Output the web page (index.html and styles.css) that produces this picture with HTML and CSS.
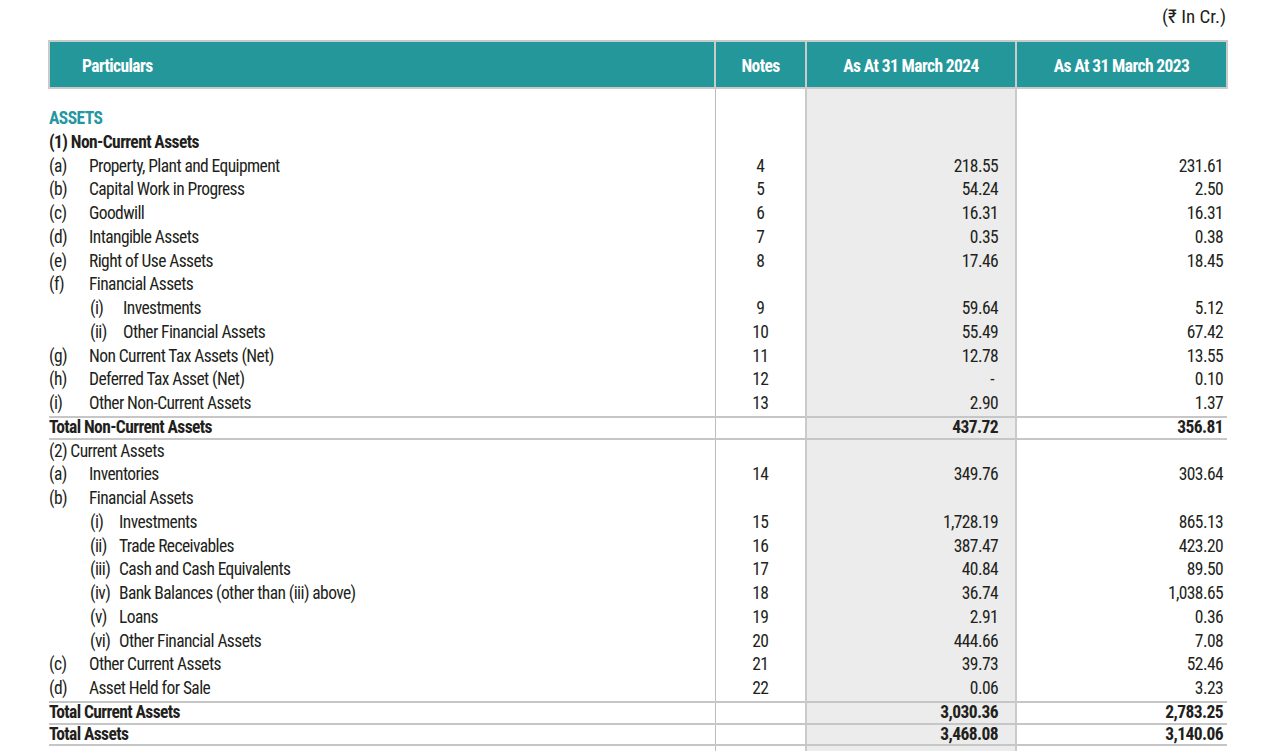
FILE: index.html
```html
<!DOCTYPE html>
<html lang="en">
<head>
<meta charset="utf-8">
<title>Balance Sheet</title>
<link rel="stylesheet" href="styles.css">
</head>
<body>
<div class="page">
  <div class="unit">(₹ In Cr.)</div>
  <table class="bs">
    <colgroup>
      <col class="w-part"><col class="w-notes"><col class="w-cur"><col class="w-prev">
    </colgroup>
    <thead>
      <tr>
        <th class="h-part">Particulars</th>
        <th class="h-notes">Notes</th>
        <th class="h-num">As At 31 March 2024</th>
        <th class="h-num">As At 31 March 2023</th>
      </tr>
    </thead>
    <tbody>
      <tr class="gap"><td></td><td class="notes"></td><td class="cur"></td><td class="prev"></td></tr>
      <tr><td class="section">ASSETS</td><td class="notes"></td><td class="cur"></td><td class="prev"></td></tr>
      <tr><td class="group">(1) Non-Current Assets</td><td class="notes"></td><td class="cur"></td><td class="prev"></td></tr>
      <tr><td><span class="mk">(a)</span>Property, Plant and Equipment</td><td class="notes">4</td><td class="cur">218.55</td><td class="prev">231.61</td></tr>
      <tr><td><span class="mk">(b)</span>Capital Work in Progress</td><td class="notes">5</td><td class="cur">54.24</td><td class="prev">2.50</td></tr>
      <tr><td><span class="mk">(c)</span>Goodwill</td><td class="notes">6</td><td class="cur">16.31</td><td class="prev">16.31</td></tr>
      <tr><td><span class="mk">(d)</span>Intangible Assets</td><td class="notes">7</td><td class="cur">0.35</td><td class="prev">0.38</td></tr>
      <tr><td><span class="mk">(e)</span>Right of Use Assets</td><td class="notes">8</td><td class="cur">17.46</td><td class="prev">18.45</td></tr>
      <tr><td><span class="mk">(f)</span>Financial Assets</td><td class="notes"></td><td class="cur"></td><td class="prev"></td></tr>
      <tr><td class="sub"><span class="mk2">(i)</span>Investments</td><td class="notes">9</td><td class="cur">59.64</td><td class="prev">5.12</td></tr>
      <tr><td class="sub"><span class="mk2">(ii)</span>Other Financial Assets</td><td class="notes">10</td><td class="cur">55.49</td><td class="prev">67.42</td></tr>
      <tr><td><span class="mk">(g)</span>Non Current Tax Assets (Net)</td><td class="notes">11</td><td class="cur">12.78</td><td class="prev">13.55</td></tr>
      <tr><td><span class="mk">(h)</span>Deferred Tax Asset (Net)</td><td class="notes">12</td><td class="cur dash">-</td><td class="prev">0.10</td></tr>
      <tr><td><span class="mk">(i)</span>Other Non-Current Assets</td><td class="notes">13</td><td class="cur">2.90</td><td class="prev">1.37</td></tr>
      <tr class="total"><td>Total Non-Current Assets</td><td class="notes"></td><td class="cur">437.72</td><td class="prev">356.81</td></tr>
      <tr><td>(2) Current Assets</td><td class="notes"></td><td class="cur"></td><td class="prev"></td></tr>
      <tr><td><span class="mk">(a)</span>Inventories</td><td class="notes">14</td><td class="cur">349.76</td><td class="prev">303.64</td></tr>
      <tr><td><span class="mk">(b)</span>Financial Assets</td><td class="notes"></td><td class="cur"></td><td class="prev"></td></tr>
      <tr><td class="sub"><span class="mk3">(i)</span>Investments</td><td class="notes">15</td><td class="cur">1,728.19</td><td class="prev">865.13</td></tr>
      <tr><td class="sub"><span class="mk3">(ii)</span>Trade Receivables</td><td class="notes">16</td><td class="cur">387.47</td><td class="prev">423.20</td></tr>
      <tr><td class="sub"><span class="mk3">(iii)</span>Cash and Cash Equivalents</td><td class="notes">17</td><td class="cur">40.84</td><td class="prev">89.50</td></tr>
      <tr><td class="sub"><span class="mk3">(iv)</span>Bank Balances (other than (iii) above)</td><td class="notes">18</td><td class="cur">36.74</td><td class="prev">1,038.65</td></tr>
      <tr><td class="sub"><span class="mk3">(v)</span>Loans</td><td class="notes">19</td><td class="cur">2.91</td><td class="prev">0.36</td></tr>
      <tr><td class="sub"><span class="mk3">(vi)</span>Other Financial Assets</td><td class="notes">20</td><td class="cur">444.66</td><td class="prev">7.08</td></tr>
      <tr><td><span class="mk">(c)</span>Other Current Assets</td><td class="notes">21</td><td class="cur">39.73</td><td class="prev">52.46</td></tr>
      <tr><td><span class="mk">(d)</span>Asset Held for Sale</td><td class="notes">22</td><td class="cur">0.06</td><td class="prev">3.23</td></tr>
      <tr class="total"><td>Total Current Assets</td><td class="notes"></td><td class="cur">3,030.36</td><td class="prev">2,783.25</td></tr>
      <tr class="total"><td>Total Assets</td><td class="notes"></td><td class="cur">3,468.08</td><td class="prev">3,140.06</td></tr>
      <tr><td></td><td class="notes"></td><td class="cur"></td><td class="prev"></td></tr>
    </tbody>
  </table>
</div>
</body>
</html>
```
FILE: styles.css
```css
html, body {
  margin: 0;
  padding: 0;
  background: #ffffff;
}

body {
  font-family: "Roboto Condensed", "Noto Sans", "Liberation Sans Narrow", sans-serif;
  font-stretch: 75%;
  letter-spacing: -0.6px;
  color: #231f20;
  overflow: hidden;
}

.page {
  padding: 5px 51px 0 48px;
  width: 1178px;
}

.unit {
  text-align: right;
  font-size: 19px;
  letter-spacing: 0;
  line-height: 24px;
  height: 35px;
  color: #231f20;
}

.bs {
  border-collapse: collapse;
  table-layout: fixed;
  width: 1178px;
}

.w-part { width: 666px; }
.w-notes { width: 91px; }
.w-cur { width: 210px; }
.w-prev { width: 211px; }

.bs thead th {
  background: #24979b;
  color: #ffffff;
  font-weight: bold;
  font-size: 17.5px;
  height: 42px;
  padding: 3px 0 0 0;
  border: 2px solid #c9cbcb;
  text-align: center;
}

.bs thead th.h-part {
  text-align: left;
  padding-left: 32px;
}

.bs td {
  height: 23.75px;
  padding: 0;
  font-size: 17.5px;
  line-height: 23.75px;
  white-space: nowrap;
  vertical-align: middle;
}

.bs tr.gap td {
  height: 18px;
}

.bs td.notes {
  text-align: center;
  border-left: 1px solid #bdbdbd;
  border-right: 2px solid #cacaca;
  padding: 0;
}

.bs td.cur {
  background: #ebeceb;
  text-align: right;
  padding: 0 17px 0 0;
  border-right: 2px solid #cacaca;
}

.bs td.cur.dash {
  padding-right: 21px;
}

.bs td.prev {
  text-align: right;
  padding: 0 4px 0 0;
}

.bs td.section {
  color: #2497a0;
  font-weight: bold;
}

.bs td.group {
  font-weight: bold;
}

.bs tr.total td {
  font-weight: bold;
  height: 19.75px;
  line-height: 19.75px;
  border-top: 2px solid #c6c6c6;
  border-bottom: 2px solid #c6c6c6;
}

.mk {
  display: inline-block;
  width: 40px;
}

.bs td.sub {
  padding-left: 41px;
}

.mk2 {
  display: inline-block;
  width: 33px;
}

.mk3 {
  display: inline-block;
  width: 29px;
}
```
